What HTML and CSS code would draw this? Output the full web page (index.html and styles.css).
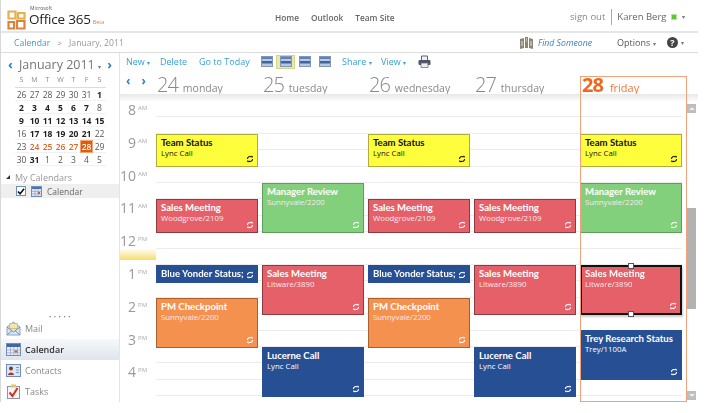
FILE: index.html
```html
<!DOCTYPE html>
<html lang="en">
<head>
<meta charset="utf-8">
<title>Office 365 Calendar</title>
<link rel="stylesheet" href="styles.css">
</head>
<body>
<svg class="defs" width="0" height="0">
  <symbol id="rec" viewBox="0 0 10 10">
    <path d="M1.800 5a3.200 3.200 0 0 1 5.200-2.500M8.200 5a3.200 3.200 0 0 1-5.200 2.500" fill="none" stroke="currentColor" stroke-width="1.300"/>
    <path d="M6 .8l2.600.3L8 3.800zM4 9.200l-2.600-.3L2 6.200z" fill="currentColor"/>
  </symbol>
  <symbol id="view" viewBox="0 0 12 11">
    <rect x=".5" y=".5" width="11" height="10" fill="#b9c8de" stroke="#7d96ba"/>
    <rect x="1" y="1" width="10" height="2" fill="#5f82b5"/>
    <rect x="1" y="5" width="10" height="2.500" fill="#3d659f"/>
  </symbol>
</svg>
<div class="app">
  <header class="top">
    <div class="logo">
      <svg class="logo-mark" width="19" height="20" viewBox="0 0 19 20">
        <path d="M1.500 1.500h7v7h-7zM11 3h6.500v5.500H11z" fill="none" stroke="#e6b04a" stroke-width="2.200"/>
        <path d="M1.500 12h5.500v6.500H1.500zM10 11h7.500v7.500H10z" fill="none" stroke="#d9833f" stroke-width="2.200"/>
      </svg>
      <div class="logo-text"><span class="ms">Microsoft</span><span class="o365">Office 365<span class="beta">Beta</span></span></div>
    </div>
    <nav class="topnav"><span>Home</span><span>Outlook</span><span>Team Site</span></nav>
    <div class="user">
      <span class="signout">sign out</span>
      <span class="name">Karen Berg</span>
      <span class="presence"></span>
      <span class="caret">▾</span>
    </div>
  </header>
  <div class="crumbs">
    <span class="crumb-link">Calendar</span><span class="crumb-sep">&gt;</span><span class="crumb-cur">January, 2011</span>
    <span class="find">
      <svg width="13" height="13" viewBox="0 0 13 13"><path d="M0 3l4-1v10l-4 1zM5 1h3v11H5zM9 2l4 1v10l-4-1z" fill="#8d8674"/><path d="M6 3h1M6 5h1M2 5v5M11 5v5" stroke="#e4e0d2"/></svg>
      <em>Find Someone</em>
    </span>
    <span class="options">Options <i class="caret">▾</i></span>
    <span class="help">?</span><i class="caret help-caret">▾</i>
  </div>
  <div class="main">
    <aside class="side">
      <div class="mini-head"><span class="arrow">‹</span><span class="mini-title">January 2011 <i class="caret">▾</i></span><span class="arrow">›</span></div>
      <div class="mini-cal">
        <b class="dow">S</b><b class="dow">M</b><b class="dow">T</b><b class="dow">W</b><b class="dow">T</b><b class="dow">F</b><b class="dow">S</b>
        <span>26</span><span>27</span><span>28</span><span>29</span><span>30</span><span>31</span><span class="bd">1</span>
        <span class="bd">2</span><span class="bd">3</span><span class="bd">4</span><span class="bd">5</span><span class="bd">6</span><span class="bd">7</span><span>8</span>
        <span class="bd">9</span><span class="bd">10</span><span class="bd">11</span><span class="bd">12</span><span class="bd">13</span><span class="bd">14</span><span class="bd">15</span>
        <span>16</span><span class="bd">17</span><span class="bd">18</span><span class="bd">19</span><span class="bd">20</span><span class="bd">21</span><span>22</span>
        <span>23</span><span class="wk">24</span><span class="wk">25</span><span class="wk">26</span><span class="wk">27</span><span class="today">28</span><span>29</span>
        <span>30</span><span class="bd">31</span><span>1</span><span>2</span><span>3</span><span>4</span><span>5</span>
      </div>
      <div class="mycal-head"><i class="tri"></i>My Calendars</div>
      <div class="mycal-row">
        <span class="check"><svg width="9" height="9" viewBox="0 0 9 9"><path d="M1 4.500l2.500 2.500L8 1.500" fill="none" stroke="#111" stroke-width="1.800"/></svg></span>
        <svg width="11" height="11" viewBox="0 0 11 11"><rect x=".5" y=".5" width="10" height="10" fill="#dde6f3" stroke="#6f8ebd"/><rect x="1" y="1" width="9" height="2" fill="#4f74ad"/><path d="M1 5.500h9M1 8h9M4 3v7M7 3v7" stroke="#8fa8cc" stroke-width=".7"/><rect x="7" y="6" width="2" height="2" fill="#d9542b"/></svg>
        <span>Calendar</span>
      </div>
      <div class="spacer"></div>
      <div class="grip">• • • • •</div>
      <div class="nav-row">
        <svg width="15" height="15" viewBox="0 0 15 15"><path d="M1 6l6.500-5L14 6v8H1z" fill="#d9e6f4" stroke="#8ba4c4"/><path d="M3.500 2.500h8v5h-8z" fill="#f6e4a8" stroke="#c5a24f" stroke-width=".6"/><path d="M1 6l6.500 5L14 6M1 14l5-4.500M14 14l-5-4.500" fill="none" stroke="#6f8fb8"/></svg>
        <span>Mail</span>
      </div>
      <div class="nav-row active">
        <svg width="15" height="13" viewBox="0 0 15 13"><rect x=".5" y=".5" width="14" height="12" fill="#e7edf6" stroke="#6f8ebd"/><rect x="1" y="1" width="13" height="3" fill="#40659f"/><path d="M1 7h13M1 9.800h13M4.500 4v8M8 4v8M11.500 4v8" stroke="#8fa8cc" stroke-width=".7"/><rect x="8.500" y="7.500" width="3" height="2" fill="#d9542b"/></svg>
        <span>Calendar</span>
      </div>
      <div class="nav-row">
        <svg width="15" height="13" viewBox="0 0 15 13"><rect x=".5" y=".5" width="14" height="12" fill="#dce6f3" stroke="#6f8ebd"/><circle cx="5" cy="4.500" r="2" fill="#7b3b2a"/><path d="M2 11c0-3.500 6-3.500 6 0z" fill="#b2352a"/><path d="M10 3.500h3M10 6h3M10 8.500h3" stroke="#7f9cc4" stroke-width="1.200"/></svg>
        <span>Contacts</span>
      </div>
      <div class="nav-row">
        <svg width="15" height="15" viewBox="0 0 15 15"><rect x="1.500" y="2.500" width="12" height="12" fill="#f4f4f4" stroke="#8b95a6"/><rect x="5" y="0.500" width="5" height="3" fill="#e8c35c"/><path d="M3.500 8.500l3 3.500 5-8" fill="none" stroke="#d22f25" stroke-width="2"/></svg>
        <span>Tasks</span>
      </div>
    </aside>
    <section class="content">
      <div class="toolbar">
        <span class="tl new">New <i class="caret">▾</i></span>
        <span class="tl del">Delete</span>
        <span class="tl goto">Go to Today</span>
        <span class="views">
          <svg class="vi" width="12" height="11"><use href="#view"/></svg>
          <span class="vsel"><svg width="12" height="11"><use href="#view"/></svg></span>
          <svg class="vi" width="12" height="11"><use href="#view"/></svg>
          <svg class="vi" width="12" height="11"><use href="#view"/></svg>
        </span>
        <span class="tl share">Share <i class="caret">▾</i></span>
        <span class="tl viewm">View <i class="caret">▾</i></span>
        <svg class="printer" width="13" height="13" viewBox="0 0 13 13"><path d="M3.500 5V1h6v4" fill="#eef1f5" stroke="#5b6470"/><rect x=".5" y="5" width="12" height="5" rx="1" fill="#4d5662"/><rect x="3" y="8" width="7" height="4.500" fill="#e9edf1" stroke="#5b6470" stroke-width=".7"/></svg>
      </div>
      <div class="dayhead">
        <div class="day-nav"><span>‹</span><span>›</span></div>
        <div class="dh-cols">
          <div class="dh"><span class="num">24</span><span class="dn">monday</span></div>
          <div class="dh"><span class="num">25</span><span class="dn">tuesday</span></div>
          <div class="dh"><span class="num">26</span><span class="dn">wednesday</span></div>
          <div class="dh"><span class="num">27</span><span class="dn">thursday</span></div>
          <div class="dh cur"><span class="num">28</span><span class="dn">friday</span></div>
        </div>
      </div>
      <div class="body">
        <div class="times">
          <div class="t"><b>8</b><i>AM</i></div>
          <div class="t"><b>9</b><i>AM</i></div>
          <div class="t"><b>10</b><i>AM</i></div>
          <div class="t"><b>11</b><i>AM</i></div>
          <div class="t noon"><b>12</b><i>PM</i></div>
          <div class="t"><b>1</b><i>PM</i></div>
          <div class="t"><b>2</b><i>PM</i></div>
          <div class="t"><b>3</b><i>PM</i></div>
          <div class="t"><b>4</b><i>PM</i></div>
        </div>
        <div class="grid">
          <div class="ev yellow c1 r3"><h4>Team Status</h4><p>Lync Call</p><svg class="rec"><use href="#rec"/></svg></div>
          <div class="ev yellow c3 r3"><h4>Team Status</h4><p>Lync Call</p><svg class="rec"><use href="#rec"/></svg></div>
          <div class="ev yellow c5 r3"><h4>Team Status</h4><p>Lync Call</p><svg class="rec"><use href="#rec"/></svg></div>

          <div class="ev green c2 r6 h3"><h4>Manager Review</h4><p>Sunnyvale/2200</p><svg class="rec"><use href="#rec"/></svg></div>
          <div class="ev green c5 r6 h3"><h4>Manager Review</h4><p>Sunnyvale/2200</p><svg class="rec"><use href="#rec"/></svg></div>

          <div class="ev red c1 r7"><h4>Sales Meeting</h4><p>Woodgrove/2109</p><svg class="rec"><use href="#rec"/></svg></div>
          <div class="ev red c3 r7"><h4>Sales Meeting</h4><p>Woodgrove/2109</p><svg class="rec"><use href="#rec"/></svg></div>
          <div class="ev red c4 r7"><h4>Sales Meeting</h4><p>Woodgrove/2109</p><svg class="rec"><use href="#rec"/></svg></div>

          <div class="ev blue c1 r11 h1"><h4>Blue Yonder Status;</h4><svg class="rec"><use href="#rec"/></svg></div>
          <div class="ev blue c3 r11 h1"><h4>Blue Yonder Status;</h4><svg class="rec"><use href="#rec"/></svg></div>

          <div class="ev red c2 r11 h3"><h4>Sales Meeting</h4><p>Litware/3890</p><svg class="rec"><use href="#rec"/></svg></div>
          <div class="ev red c4 r11 h3"><h4>Sales Meeting</h4><p>Litware/3890</p><svg class="rec"><use href="#rec"/></svg></div>
          <div class="ev red sel c5 r11 h3"><h4>Sales Meeting</h4><p>Litware/3890</p><svg class="rec"><use href="#rec"/></svg><span class="handle ht"></span><span class="handle hb"></span></div>

          <div class="ev orange c1 r13 h3"><h4>PM Checkpoint</h4><p>Sunnyvale/2200</p><svg class="rec"><use href="#rec"/></svg></div>
          <div class="ev orange c3 r13 h3"><h4>PM Checkpoint</h4><p>Sunnyvale/2200</p><svg class="rec"><use href="#rec"/></svg></div>

          <div class="ev blue c5 r15 h3"><h4>Trey Research Status</h4><p>Trey/1100A</p><svg class="rec"><use href="#rec"/></svg></div>
          <div class="ev blue c2 r16 h3"><h4>Lucerne Call</h4><p>Lync Call</p><svg class="rec"><use href="#rec"/></svg></div>
          <div class="ev blue c4 r16 h3"><h4>Lucerne Call</h4><p>Lync Call</p><svg class="rec"><use href="#rec"/></svg></div>
        </div>
        <div class="scroll">
          <span class="sb-btn"><i class="up"></i></span>
          <span class="sb-track"><span class="sb-thumb"></span></span>
          <span class="sb-btn"><i class="down"></i></span>
        </div>
      </div>
      <div class="today-outline"></div>
    </section>
  </div>
</div>
</body>
</html>
```
FILE: styles.css
```css
* { box-sizing: border-box; }
html, body { margin: 0; padding: 0; background: #fff; }
body { width: 709px; height: 413px; overflow: hidden; font-family: "Open Sans", "Noto Sans", sans-serif; color: #666; }
.defs { position: absolute; }
i { font-style: normal; }
.caret { font-size: 6px; color: #777; }

.app { width: 698px; height: 402px; display: flex; flex-direction: column; border-left: 1px solid #d8d8d8; filter: blur(.3px); }

/* header */
.top { height: 33px; flex: none; display: flex; align-items: center; border-bottom: 2px solid #e6e6e6; }
.logo { display: flex; align-items: flex-end; margin-left: 6px; width: 268px; gap: 3px; height: 31px; padding-bottom: 1px; }
.logo-text { display: flex; flex-direction: column; line-height: 1; }
.ms { font-size: 5px; line-height: 5px; color: #555; margin-left: 1px; }
.o365 { font-size: 13.500px; line-height: 16px; color: #222; letter-spacing: -.2px; }
.beta { font-size: 5.500px; color: #d9854a; margin-left: 2px; letter-spacing: 0; }
.topnav { display: flex; gap: 12px; font-size: 8.300px; color: #666; font-weight: 600; width: 295px; padding-top: 3px; }
.user { display: flex; align-items: center; font-size: 9.500px; color: #777; padding-top: 2px; }
.signout { padding-right: 6px; border-right: 1px solid #aaa; line-height: 16px; margin-right: 5px; color: #888; }
.name { color: #666; font-size: 9.500px; }
.presence { width: 6px; height: 6px; background: #57c732; margin: 0 5px; border: 1px solid #b5e29d; }

.crumbs { height: 20px; flex: none; display: flex; align-items: center; font-size: 8.700px; border-bottom: 1px solid #dcdcdc; padding-left: 13px; }
.crumb-link { color: #35a1d8; }
.crumb-sep { margin: 0 7px; color: #888; font-size: 8px; }
.crumb-cur { color: #999; width: 451px; }
.find { display: flex; align-items: center; gap: 5px; width: 97px; }
.find em { color: #3b7fc6; font-size: 8.700px; white-space: nowrap; }
.options { color: #555; width: 50px; font-size: 9px; white-space: nowrap; }
.help { width: 11px; height: 11px; border-radius: 50%; background: #444; color: #fff; font-size: 9px; font-weight: 700; line-height: 11px; text-align: center; flex: none; }
.help-caret { margin-left: 3px; }

.main { flex: 1; display: flex; min-height: 0; }

/* sidebar */
.side { width: 119px; flex: none; display: flex; flex-direction: column; border-right: 1px solid #e4e4e4; }
.mini-head { display: flex; justify-content: space-between; align-items: center; padding: 0 7px 0 7px; height: 22px; }
.mini-head .arrow { color: #2f7fc4; font-size: 13px; font-weight: 700; line-height: 1; }
.mini-title { font-size: 12.500px; color: #777; white-space: nowrap; }
.mini-cal { display: grid; grid-template-columns: repeat(7, 13px); grid-auto-rows: 13px; margin: 0 0 0 14px; font-size: 8.500px; text-align: center; line-height: 13px; color: #555; }
.mini-cal .dow { font-weight: 400; font-size: 7px; color: #888; border-bottom: 1px solid #ddd; line-height: 10px; }
.mini-cal span { border-bottom: 1px solid #f1f1f1; }
.mini-cal .bd { font-weight: 700; color: #222; }
.mini-cal .wk { font-weight: 600; color: #e0662a; }
.mini-cal .today { background: #e2590f; color: #fff; font-weight: 600; border: 1px solid #f3a36d; line-height: 11px; }

.mycal-head { margin-top: 4px; height: 14px; font-size: 9px; color: #999; display: flex; align-items: center; padding-left: 5px; gap: 5px; }
.tri { width: 0; height: 0; border-left: 4px solid transparent; border-bottom: 4px solid #333; }
.mycal-row { height: 14px; background: #efefef; display: flex; align-items: center; padding-left: 15px; gap: 5px; font-size: 8.500px; color: #666; }
.check { width: 10px; height: 10px; border: 1px solid #6f8fb8; background: #fff; display: flex; align-items: center; justify-content: center; }
.spacer { flex: 1; }
.grip { text-align: center; font-size: 6px; letter-spacing: .5px; color: #777; height: 9px; line-height: 16px; }
.nav-row { height: 21px; display: flex; align-items: center; gap: 4px; padding-left: 5px; font-size: 9px; color: #888; }
.nav-row.active { background: linear-gradient(#f6f8fb, #dfe5ec); color: #333; font-weight: 600; }

/* content */
.content { flex: 1; min-width: 0; position: relative; display: flex; flex-direction: column; }
.toolbar { height: 17px; flex: none; display: flex; align-items: center; font-size: 9px; padding-left: 6px; }
.tl { color: #35a1d8; white-space: nowrap; }
.tl .caret { color: #35a1d8; }
.new { width: 34px; }
.del { width: 39px; }
.goto { width: 62px; }
.views { display: flex; align-items: center; width: 81px; }
.vi { margin-right: 3px; }
.vsel { width: 19px; height: 14px; background: #e9eaa6; border: 1px solid #d5d68a; display: flex; align-items: center; justify-content: center; margin-right: 4px; }
.views .vi:last-child { margin-left: 5px; }
.share { width: 39px; }
.viewm { width: 37px; }

.dayhead { height: 24px; flex: none; display: flex; align-items: center; }
.day-nav { width: 36px; flex: none; display: flex; gap: 11px; padding-left: 6px; color: #2f7fc4; font-size: 12px; font-weight: 700; line-height: 1; margin-top: -2px; }
.dh-cols { display: grid; grid-template-columns: repeat(5, 102px); column-gap: 4px; margin-top: 5px; }
.dh { display: flex; align-items: baseline; gap: 5px; padding-left: 1px; white-space: nowrap; }
.num { font-size: 20px; line-height: 21px; color: #888; font-weight: 300; letter-spacing: -1px; }
.dn { font-size: 10.500px; color: #888; }
.dh.cur .num { color: #f0661e; font-weight: 700; }
.dh.cur .dn { color: #ec7a3e; margin-left: 2px; font-size: 11px; }
.dh.cur { padding-left: 2px; margin-left: 0; }

.body { flex: 1; min-height: 0; display: flex; align-items: stretch; background: linear-gradient(#e8e8e8, #fff 8px); overflow: hidden; padding-top: 7px; }
.times { width: 36px; flex: none; display: grid; grid-auto-rows: 32.800px; align-content: start; padding-top: 1px; }
.t { display: flex; justify-content: flex-end; align-items: flex-start; gap: 2px; padding-right: 6px; color: #999; position: relative; }
.t b { font-size: 14px; font-weight: 400; line-height: 16px; }
.t i { font-size: 6px; line-height: 12px; color: #aaa; width: 12px; }
.t.noon::after { content: ""; position: absolute; left: 0; right: 0; top: 16px; height: 11px; background: linear-gradient(#fffdf2, #f8dd70); }

.grid { width: 526px; flex: none; display: grid; grid-template-columns: repeat(5, 102px); column-gap: 4px; grid-auto-rows: 16.400px; grid-template-rows: repeat(19, 16.400px);
  background: repeating-linear-gradient(#fff 0, #fff 15.400px, #ececec 15.400px, #ececec 16.400px); }
.scroll { width: 9px; flex: none; margin-left: 5px; display: flex; flex-direction: column; padding-top: 3px; height: 299px; }
.sb-btn { height: 9px; background: #bdbdbd; display: flex; align-items: center; justify-content: center; flex: none; }
.sb-btn .up { border: 3px solid transparent; border-top: 0; border-bottom: 3px solid #eee; }
.sb-btn .down { border: 3px solid transparent; border-bottom: 0; border-top: 3px solid #eee; }
.sb-track { flex: 1; display: flex; flex-direction: column; padding-top: 95px; padding-bottom: 82px; }
.sb-thumb { flex: 1; background: #b2b2b2; }

/* events */
.ev { position: relative; padding: 2px 4px; border: 1px solid; color: #fff; min-width: 0; }
.ev h4 { margin: 0; font-family: Lato, "Open Sans", sans-serif; font-size: 9.600px; font-weight: 700; line-height: 12px; white-space: nowrap; }
.ev p { margin: 0; font-size: 7.800px; line-height: 9px; white-space: nowrap; }
.rec { position: absolute; right: 3px; bottom: 3px; width: 8px; height: 8px; }
.yellow { background: #fefe3c; border-color: #b0ad3e; color: #111; }
.green { background: #82cf7c; border-color: #5c9e5a; }
.green p, .red p, .orange p { color: #fbeaea; }
.red { background: #e6606a; border-color: #8e3a40; }
.orange { background: #f5914f; border-color: #a9602c; }
.blue { background: #274f94; border-color: #274f94; }
.c1 { grid-column: 1; } .c2 { grid-column: 2; } .c3 { grid-column: 3; } .c4 { grid-column: 4; } .c5 { grid-column: 5; }
.r3 { grid-row-start: 3; } .r6 { grid-row-start: 6; } .r7 { grid-row-start: 7; } .r11 { grid-row-start: 11; }
.r13 { grid-row-start: 13; } .r15 { grid-row-start: 15; } .r16 { grid-row-start: 16; }
.r3 { grid-row-end: span 2; height: 33px; }
.r7 { grid-row-end: span 2; height: 34px; }
.h1 { grid-row-end: span 1; height: 18px; padding-top: 2px; overflow: hidden; }
.h3 { grid-row-end: span 3; height: 50px; }
.sel { border: 2px solid #111; box-shadow: 1px 2px 2px #c9c9c9; padding: 1px 3px; }
.handle { position: absolute; left: 50%; width: 6px; height: 6px; margin-left: -3px; background: #fff; border: 1px solid #555; }
.ht { top: -4px; } .hb { bottom: -4px; }
.today-outline { position: absolute; left: 460px; top: 23px; width: 107px; height: 326px; border: 1px solid #f2a27a; pointer-events: none; }
```
